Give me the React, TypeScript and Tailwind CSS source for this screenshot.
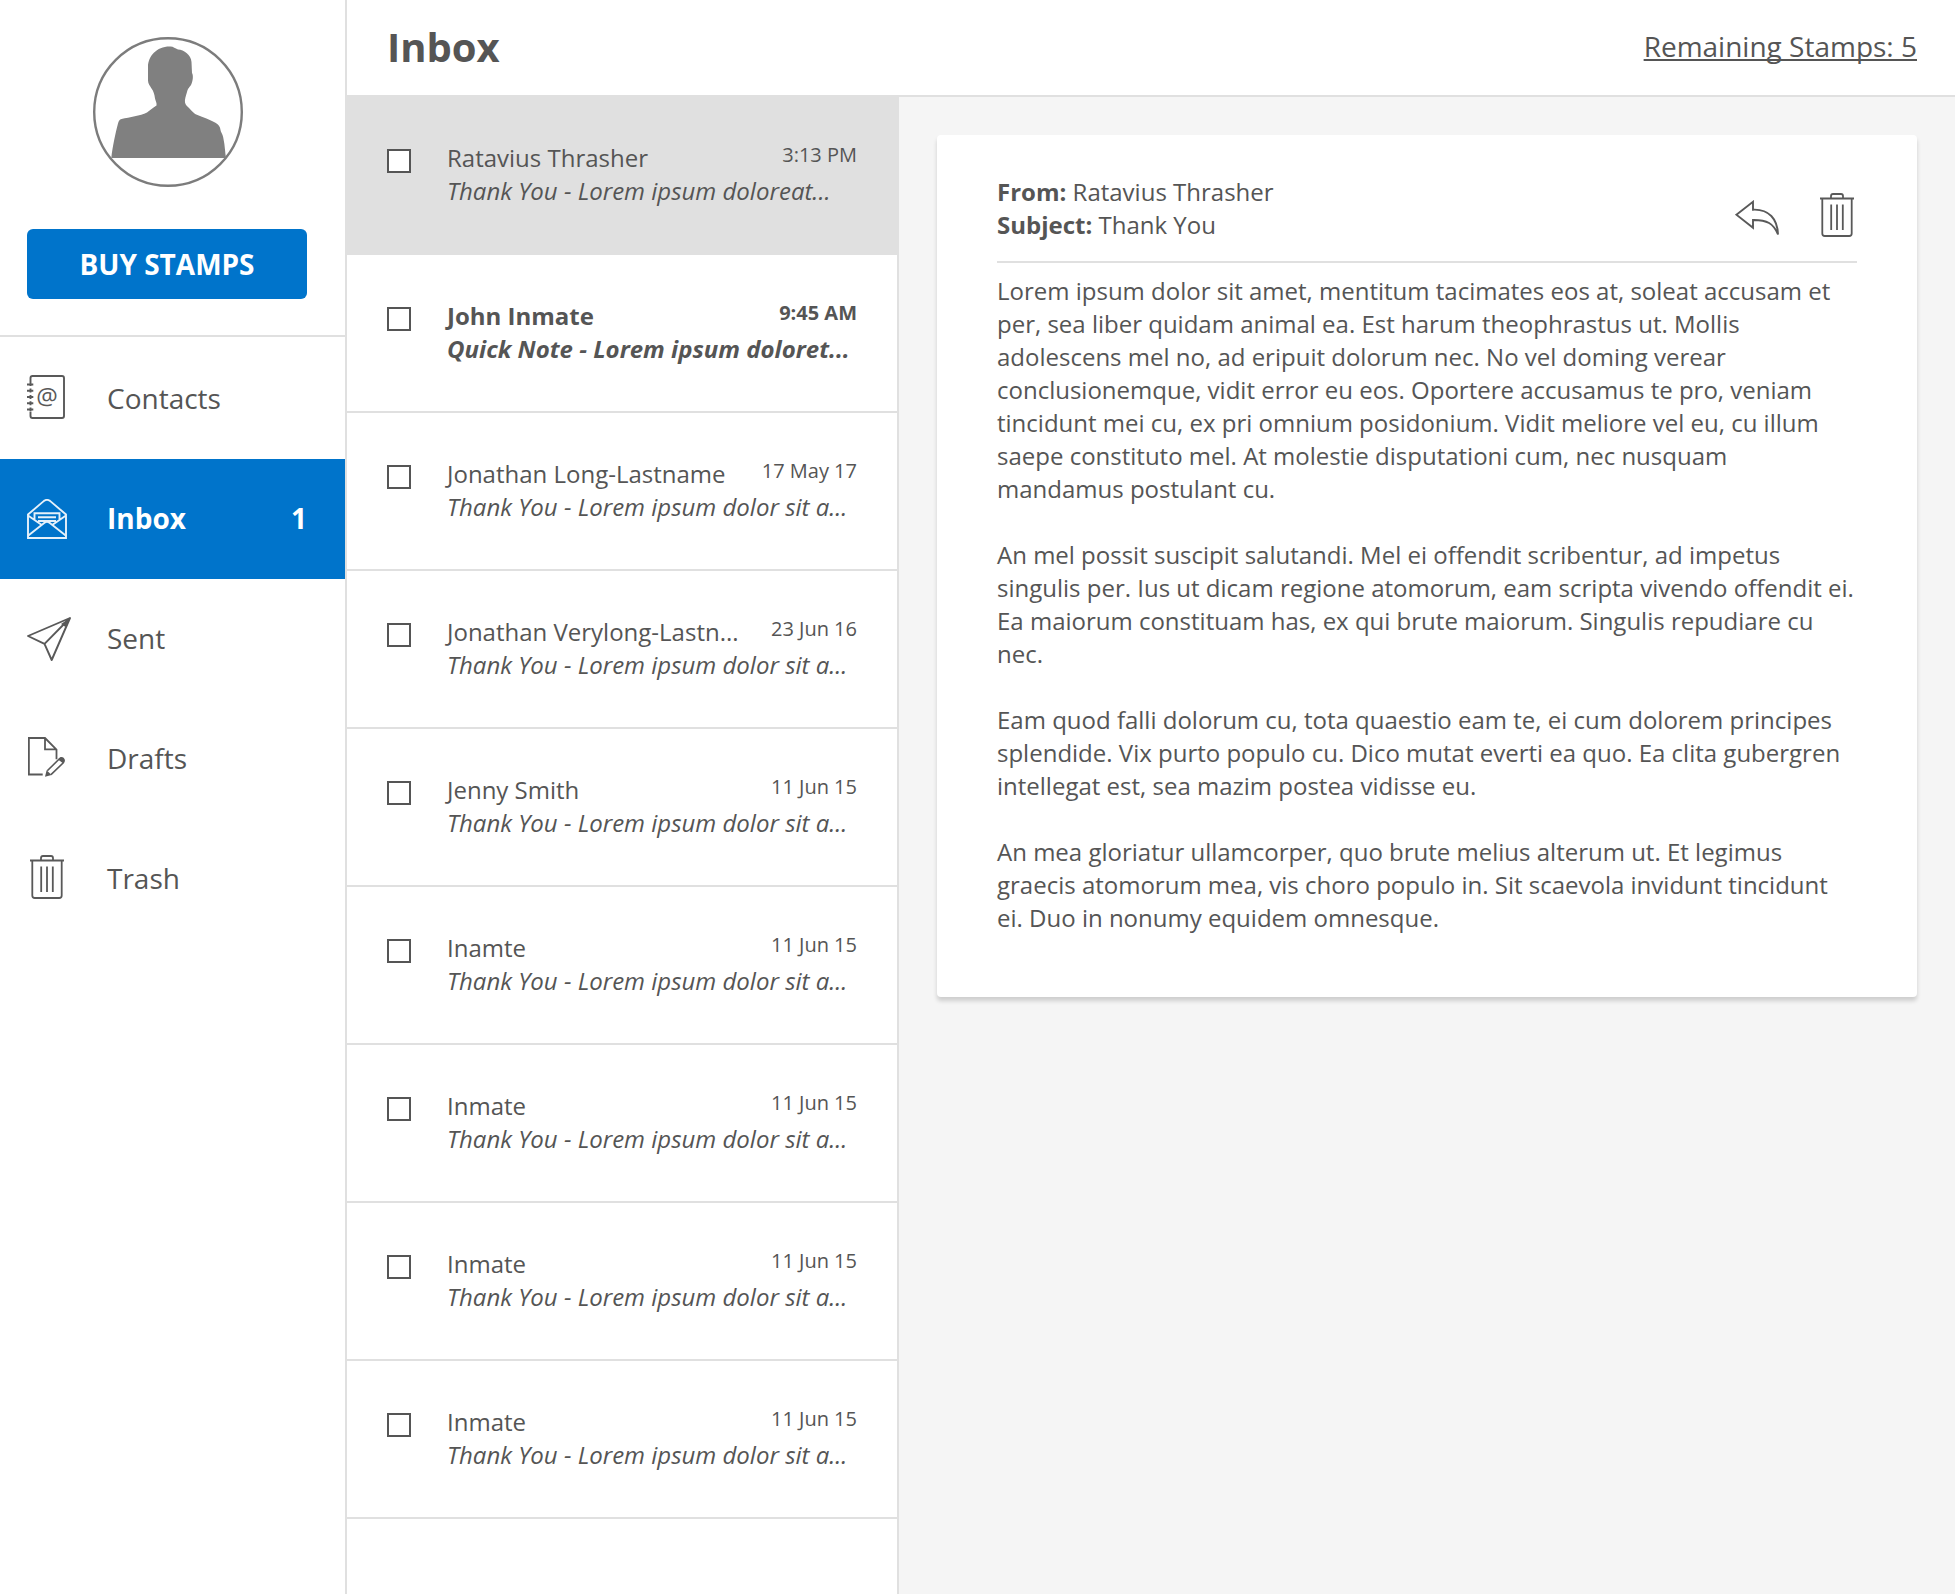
import type { ReactNode } from "react";

type Message = { name: string; time: string; preview: string; unread?: boolean; selected?: boolean };

const messages: Message[] = [
  { name: "Ratavius Thrasher", time: "3:13 PM", preview: "Thank You - Lorem ipsum doloreat...", selected: true },
  { name: "John Inmate", time: "9:45 AM", preview: "Quick Note - Lorem ipsum doloret...", unread: true },
  { name: "Jonathan Long-Lastname", time: "17 May 17", preview: "Thank You - Lorem ipsum dolor sit a..." },
  { name: "Jonathan Verylong-Lastn...", time: "23 Jun 16", preview: "Thank You - Lorem ipsum dolor sit a..." },
  { name: "Jenny Smith", time: "11 Jun 15", preview: "Thank You - Lorem ipsum dolor sit a..." },
  { name: "Inamte", time: "11 Jun 15", preview: "Thank You - Lorem ipsum dolor sit a..." },
  { name: "Inmate", time: "11 Jun 15", preview: "Thank You - Lorem ipsum dolor sit a..." },
  { name: "Inmate", time: "11 Jun 15", preview: "Thank You - Lorem ipsum dolor sit a..." },
  { name: "Inmate", time: "11 Jun 15", preview: "Thank You - Lorem ipsum dolor sit a..." },
];

const paragraphs: string[][] = [
  [
    "Lorem ipsum dolor sit amet, mentitum tacimates eos at, soleat accusam et",
    "per, sea liber quidam animal ea. Est harum theophrastus ut. Mollis",
    "adolescens mel no, ad eripuit dolorum nec. No vel doming verear",
    "conclusionemque, vidit error eu eos. Oportere accusamus te pro, veniam",
    "tincidunt mei cu, ex pri omnium posidonium. Vidit meliore vel eu, cu illum",
    "saepe constituto mel. At molestie disputationi cum, nec nusquam",
    "mandamus postulant cu.",
  ],
  [
    "An mel possit suscipit salutandi. Mel ei offendit scribentur, ad impetus",
    "singulis per. Ius ut dicam regione atomorum, eam scripta vivendo offendit ei.",
    "Ea maiorum constituam has, ex qui brute maiorum. Singulis repudiare cu",
    "nec.",
  ],
  [
    "Eam quod falli dolorum cu, tota quaestio eam te, ei cum dolorem principes",
    "splendide. Vix purto populo cu. Dico mutat everti ea quo. Ea clita gubergren",
    "intellegat est, sea mazim postea vidisse eu.",
  ],
  [
    "An mea gloriatur ullamcorper, quo brute melius alterum ut. Et legimus",
    "graecis atomorum mea, vis choro populo in. Sit scaevola invidunt tincidunt",
    "ei. Duo in nonumy equidem omnesque.",
  ],
];

function Avatar() {
  return (
    <svg width="150" height="150" viewBox="93 37 150 150" className="block">
      <circle cx="168" cy="112" r="73.800" fill="#fff" stroke="#7c7c7c" strokeWidth="2.400" />
      <path
        fill="#808080"
        d="M111.3 158C112.5 147 115.5 133 118 123.500C118.700 121 119.500 119.500 121.500 119C130 117 140 116 147 112.500C150 110.500 153 107.500 156.500 105.500C157 103 155.500 101 155 98.500C154.500 94.500 153.500 91 151.500 88.500C150 86 148 83.500 148 80.500L148 67C148 56 157 46 170.500 46.500C173.500 46.500 175 48.500 178 49.500C184 50 191 54.500 191.500 62L192 73C193.500 75.500 193 81 191 85C189 88 188 88 187 92C186 96 184.500 99 185 102.500C185.500 105 187.500 106.500 189.500 108.500C192 111 194 114 197.500 115C203 117.500 210 119.500 215 122.500C218.500 124.500 220.300 126.500 220.500 130C221 133 223 134 223.500 139C225 146 225 152 226 158Z"
      />
    </svg>
  );
}

function ContactsIcon() {
  return (
    <svg width="44" height="44" viewBox="0 0 44 44" fill="none" stroke="#595959" strokeWidth="1.900">
      <path d="M3.500 7V3Q3.500 1 5.500 1H35Q37 1 37 3V41Q37 43 35 43H5.500Q3.500 43 3.500 41V37" />
      <path d="M0 9.500H6.300M0 15.800H6.300M0 22H6.300M0 28.300H6.300M0 34.500H6.300M3.500 7V11M3.500 13.500V17.500M3.500 20V24M3.500 26.300V30.300M3.500 32.500V36.500" />
      <text x="20" y="29.500" textAnchor="middle" fontSize="24" fontWeight="500" fontFamily="Open Sans, sans-serif" fill="#595959" stroke="none">@</text>
    </svg>
  );
}

function InboxIcon() {
  return (
    <svg width="40" height="40" viewBox="0 0 40 40" fill="none" stroke="#e6f1fa" strokeWidth="1.900">
      <path d="M1 15.500L17 1.900Q20 -0.200 23 1.900L39 15.500V39H1Z" />
      <path d="M1 36.800L17.500 23.800Q20 22 22.500 23.800L39 36.800M1 16.500L14.800 26M39 16.500L25.200 26M7.500 21V14.200H32.500V21M11 18.200H29M11 22H29" />
    </svg>
  );
}

function SentIcon() {
  return (
    <svg width="44" height="44" viewBox="0 0 44 44" fill="none" stroke="#595959" strokeWidth="1.900" strokeLinejoin="round">
      <path d="M43 1L1 19L17.500 26.800L24.700 43ZM43 1L17.500 26.800" />
      <path d="M43 1L34 7L38.500 10Z" fill="#595959" stroke="none" />
    </svg>
  );
}

function DraftsIcon() {
  return (
    <svg width="38" height="40" viewBox="0 0 38 40" fill="none" stroke="#595959" strokeWidth="1.800">
      <path d="M15.700 37.500H1.900V1H18L29.500 12.500V22.300M18 1V12.300H29.500" />
      <path d="M20.300 33.800L32.200 22Q34.300 20 36.200 21.500Q38 23.500 36.300 25.700L24 37.600" strokeWidth="1.600" />
      <path d="M18 39.800L19.600 33.300L24.600 38Z" fill="#595959" stroke="none" />
      <path d="M31 22.500L33.500 20.500Q36 20.300 37 22.500Q37.500 24.500 36 26.300Z" fill="#595959" stroke="none" />
    </svg>
  );
}

function TrashIcon() {
  return (
    <svg width="34" height="44" viewBox="0 0 34 44" fill="none" stroke="#595959" strokeWidth="1.800">
      <path d="M0 5.500H34M11 5.500V3Q11 1 13 1H21Q23 1 23 3V5.500M2.300 5.500V40.500Q2.300 43 4.800 43H29.200Q31.700 43 31.700 40.500V5.500" />
      <path d="M11.200 11.500V37M17 11.500V37M22.800 11.500V37" />
    </svg>
  );
}

function ReplyIcon() {
  return (
    <svg width="44" height="36" viewBox="0 0 44 36" fill="none" stroke="#595959" strokeWidth="1.900">
      <path d="M1.400 14.700L18 1.800V9.700C34 9 42.500 19 43 34.500C38.500 23.500 32 19.800 18 20V27.700Z" />
    </svg>
  );
}

function NavItem({ icon, label, count, active }: { icon: ReactNode; label: string; count?: number; active?: boolean }) {
  return (
    <a
      className={
        active
          ? "flex h-[120px] items-center bg-[#0074cb] pr-[38px] pl-[27px] font-bold text-white"
          : "flex h-[120px] items-center pr-[38px] pl-[27px]"
      }
    >
      <span className="flex w-20 shrink-0 items-center">{icon}</span>
      <span className="flex-1 pb-[2px] text-[28px] leading-[38px]">{label}</span>
      {count !== undefined && <span className="pb-[2px] text-[28px] leading-[38px]">{count}</span>}
    </a>
  );
}

function MessageRow({ message }: { message: Message }) {
  const { name, time, preview, unread, selected } = message;
  return (
    <li className={`flex h-[158px] border-b-2 border-[#e0e0e0] pr-10 pl-10 pt-11 ${selected ? "bg-[#e0e0e0]" : ""} ${unread ? "font-bold" : ""}`}>
      <span className="mt-2 mr-9 size-6 shrink-0 border-2 border-[#555] bg-white" />
      <div className="min-w-0 flex-1 whitespace-nowrap text-2xl leading-[33px]">
        <div className="flex items-start justify-between">
          <span>{name}</span>
          <span className="text-xl leading-[27px]">{time}</span>
        </div>
        <p className="italic">{preview}</p>
      </div>
    </li>
  );
}

export default function App() {
  return (
    <div className="flex h-[1594px] w-[1955px] overflow-hidden bg-white font-['Open_Sans',sans-serif] text-[#555]">
      <aside className="w-[347px] shrink-0 border-r-2 border-[#e0e0e0]">
        <div className="flex h-[337px] flex-col border-b-2 border-[#e0e0e0] pt-[37px] pl-[27px]">
          <div className="ml-[66px]">
            <Avatar />
          </div>
          <button className="mt-[42px] h-[70px] w-[280px] rounded-[6px] bg-[#0074cb] text-[28px] font-bold text-white">
            BUY STAMPS
          </button>
        </div>
        <nav className="pt-[2px]">
          <NavItem icon={<span className="pb-1"><ContactsIcon /></span>} label="Contacts" />
          <NavItem icon={<InboxIcon />} label="Inbox" count={1} active />
          <NavItem icon={<SentIcon />} label="Sent" />
          <NavItem icon={<span className="pb-1"><DraftsIcon /></span>} label="Drafts" />
          <NavItem icon={<span className="ml-[3px] pb-1"><TrashIcon /></span>} label="Trash" />
        </nav>
      </aside>

      <div className="flex flex-1 flex-col">
        <header className="flex h-[97px] shrink-0 items-center justify-between border-b-2 border-[#e0e0e0] pr-[38px] pl-10">
          <h1 className="pb-[2px] text-[40px] leading-[54px] font-bold">Inbox</h1>
          <a className="pb-[3px] text-[28px] leading-[38px] underline decoration-2 underline-offset-[2px] [text-decoration-skip-ink:none]">
            Remaining Stamps: 5
          </a>
        </header>

        <div className="flex flex-1">
          <ul className="w-[552px] shrink-0 border-r-2 border-[#e0e0e0]">
            {messages.map((message, index) => (
              <MessageRow key={index} message={message} />
            ))}
          </ul>

          <main className="flex-1 bg-[#f5f5f5] pt-[38px] pr-[38px] pl-[38px]">
            <article className="h-[862px] rounded-[4px] bg-white px-[60px] pt-10 text-2xl leading-[33px] shadow-[0_4px_4px_rgba(0,0,0,0.16)]">
              <div className="flex h-[88px] justify-between border-b-2 border-[#e0e0e0]">
                <div>
                  <p><strong>From:</strong> Ratavius Thrasher</p>
                  <p><strong>Subject:</strong> Thank You</p>
                </div>
                <div className="flex items-start gap-[41px] pt-[18px] pr-[3px]">
                  <span className="mt-[7px]"><ReplyIcon /></span>
                  <TrashIcon />
                </div>
              </div>
              <div className="flex flex-col gap-[33px] pt-[11px] whitespace-nowrap">
                {paragraphs.map((lines, index) => (
                  <p key={index}>
                    {lines.map((line) => (
                      <span key={line} className="block">{line}</span>
                    ))}
                  </p>
                ))}
              </div>
            </article>
          </main>
        </div>
      </div>
    </div>
  );
}
